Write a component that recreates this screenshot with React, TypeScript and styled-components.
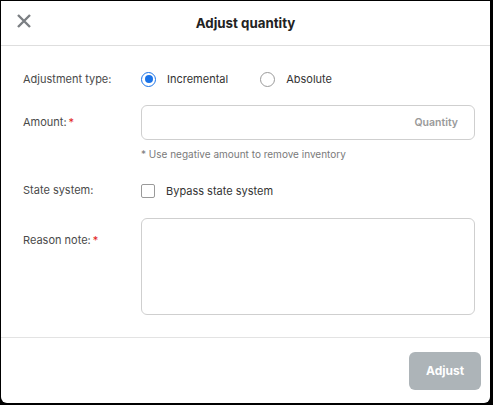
import styled, { createGlobalStyle } from 'styled-components'

const GlobalStyle = createGlobalStyle`
  html, body {
    margin: 0;
    padding: 0;
    background: #000;
  }
  body {
    font-family: Inter, "Noto Sans", sans-serif;
    color: #3c3c3c;
  }
  * { box-sizing: border-box; }
`

const Frame = styled.div`
  width: 493px;
  height: 405px;
  padding: 1px 3px 2px 1px;
`

const Modal = styled.div`
  display: flex;
  flex-direction: column;
  height: 100%;
  background: #fff;
  border-radius: 0 0 6px 6px;
  overflow: hidden;
`

const Header = styled.div`
  position: relative;
  display: flex;
  justify-content: center;
  align-items: center;
  height: 45px;
  border-bottom: 1px solid #dedede;
`

const CloseButton = styled.button`
  position: absolute;
  left: 14px;
  top: 11px;
  display: flex;
  padding: 0;
  border: none;
  background: none;
  cursor: pointer;
`

const Title = styled.h2`
  margin: 0;
  font-size: 13.3px;
  font-weight: 700;
  color: #222;
`

const Body = styled.div`
  display: flex;
  flex-direction: column;
  padding: 24px 15px 0 22px;
  flex: 1;
  border-bottom: 1px solid #e3e3e3;
`

const Row = styled.div<{ $gap: number }>`
  display: grid;
  grid-template-columns: 118px 1fr;
  align-items: center;
  margin-bottom: ${p => p.$gap}px;
`

const Label = styled.label<{ $pad?: number }>`
  font-size: 11px;
  color: #4a4a4a;
  padding-top: ${p => p.$pad ?? 0}px;
  align-self: start;
`

const Req = styled.span`
  color: #e2231a;
  margin-left: 2px;
`

const Options = styled.div`
  display: flex;
  align-items: center;
  height: 18px;
`

const Option = styled.label`
  display: flex;
  align-items: center;
  gap: 11px;
  margin-right: 32px;
  font-size: 11px;
  color: #333;
`

const Radio = styled.span<{ $checked?: boolean }>`
  width: 15px;
  height: 15px;
  border-radius: 50%;
  border: ${p => (p.$checked ? '1.5px solid #1a73e8' : '1px solid #9a9a9a')};
  display: flex;
  align-items: center;
  justify-content: center;

  &::after {
    content: '';
    display: ${p => (p.$checked ? 'block' : 'none')};
    width: 8px;
    height: 8px;
    border-radius: 50%;
    background: #1a73e8;
  }
`

const Checkbox = styled.span`
  width: 14px;
  height: 14px;
  border: 1px solid #9a9a9a;
  border-radius: 2px;
`

const Field = styled.div`
  display: flex;
  flex-direction: column;
`

const InputBox = styled.div`
  display: flex;
  align-items: center;
  justify-content: flex-end;
  height: 35px;
  padding: 0 16px;
  border: 1px solid #cfcfcf;
  border-radius: 6px;
`

const Placeholder = styled.span`
  font-size: 10.5px;
  font-weight: 600;
  color: #9a9a9a;
`

const Hint = styled.span`
  margin-top: 8px;
  font-size: 10px;
  color: #7a7a7a;
`

const TextArea = styled.div`
  height: 97px;
  border: 1px solid #cfcfcf;
  border-radius: 6px;
`

const Footer = styled.div`
  display: flex;
  justify-content: flex-end;
  align-items: center;
  height: 65px;
  padding: 0 9px 0 0;
`

const Button = styled.button`
  width: 72px;
  height: 38px;
  border: none;
  border-radius: 6px;
  background: #adb4b8;
  color: #fff;
  font-family: inherit;
  font-size: 12px;
  font-weight: 700;
`

export default function App() {
  return (
    <>
      <GlobalStyle />
      <Frame>
        <Modal>
          <Header>
            <CloseButton aria-label="Close">
              <svg width="18" height="18" viewBox="0 0 18 18">
                <path d="M3 3 L15 15 M15 3 L3 15" stroke="#7b7f83" strokeWidth="2.4" />
              </svg>
            </CloseButton>
            <Title>Adjust quantity</Title>
          </Header>
          <Body>
            <Row $gap={17}>
              <Label $pad={2}>Adjustment type:</Label>
              <Options>
                <Option>
                  <Radio $checked />
                  Incremental
                </Option>
                <Option>
                  <Radio />
                  Absolute
                </Option>
              </Options>
            </Row>
            <Row $gap={22}>
              <Label $pad={10}>Amount:<Req>*</Req></Label>
              <Field>
                <InputBox>
                  <Placeholder>Quantity</Placeholder>
                </InputBox>
                <Hint>* Use negative amount to remove inventory</Hint>
              </Field>
            </Row>
            <Row $gap={18}>
              <Label $pad={1}>State system:</Label>
              <Options>
                <Option>
                  <Checkbox />
                  Bypass state system
                </Option>
              </Options>
            </Row>
            <Row $gap={0}>
              <Label $pad={15}>Reason note:<Req>*</Req></Label>
              <TextArea />
            </Row>
          </Body>
          <Footer>
            <Button>Adjust</Button>
          </Footer>
        </Modal>
      </Frame>
    </>
  )
}
